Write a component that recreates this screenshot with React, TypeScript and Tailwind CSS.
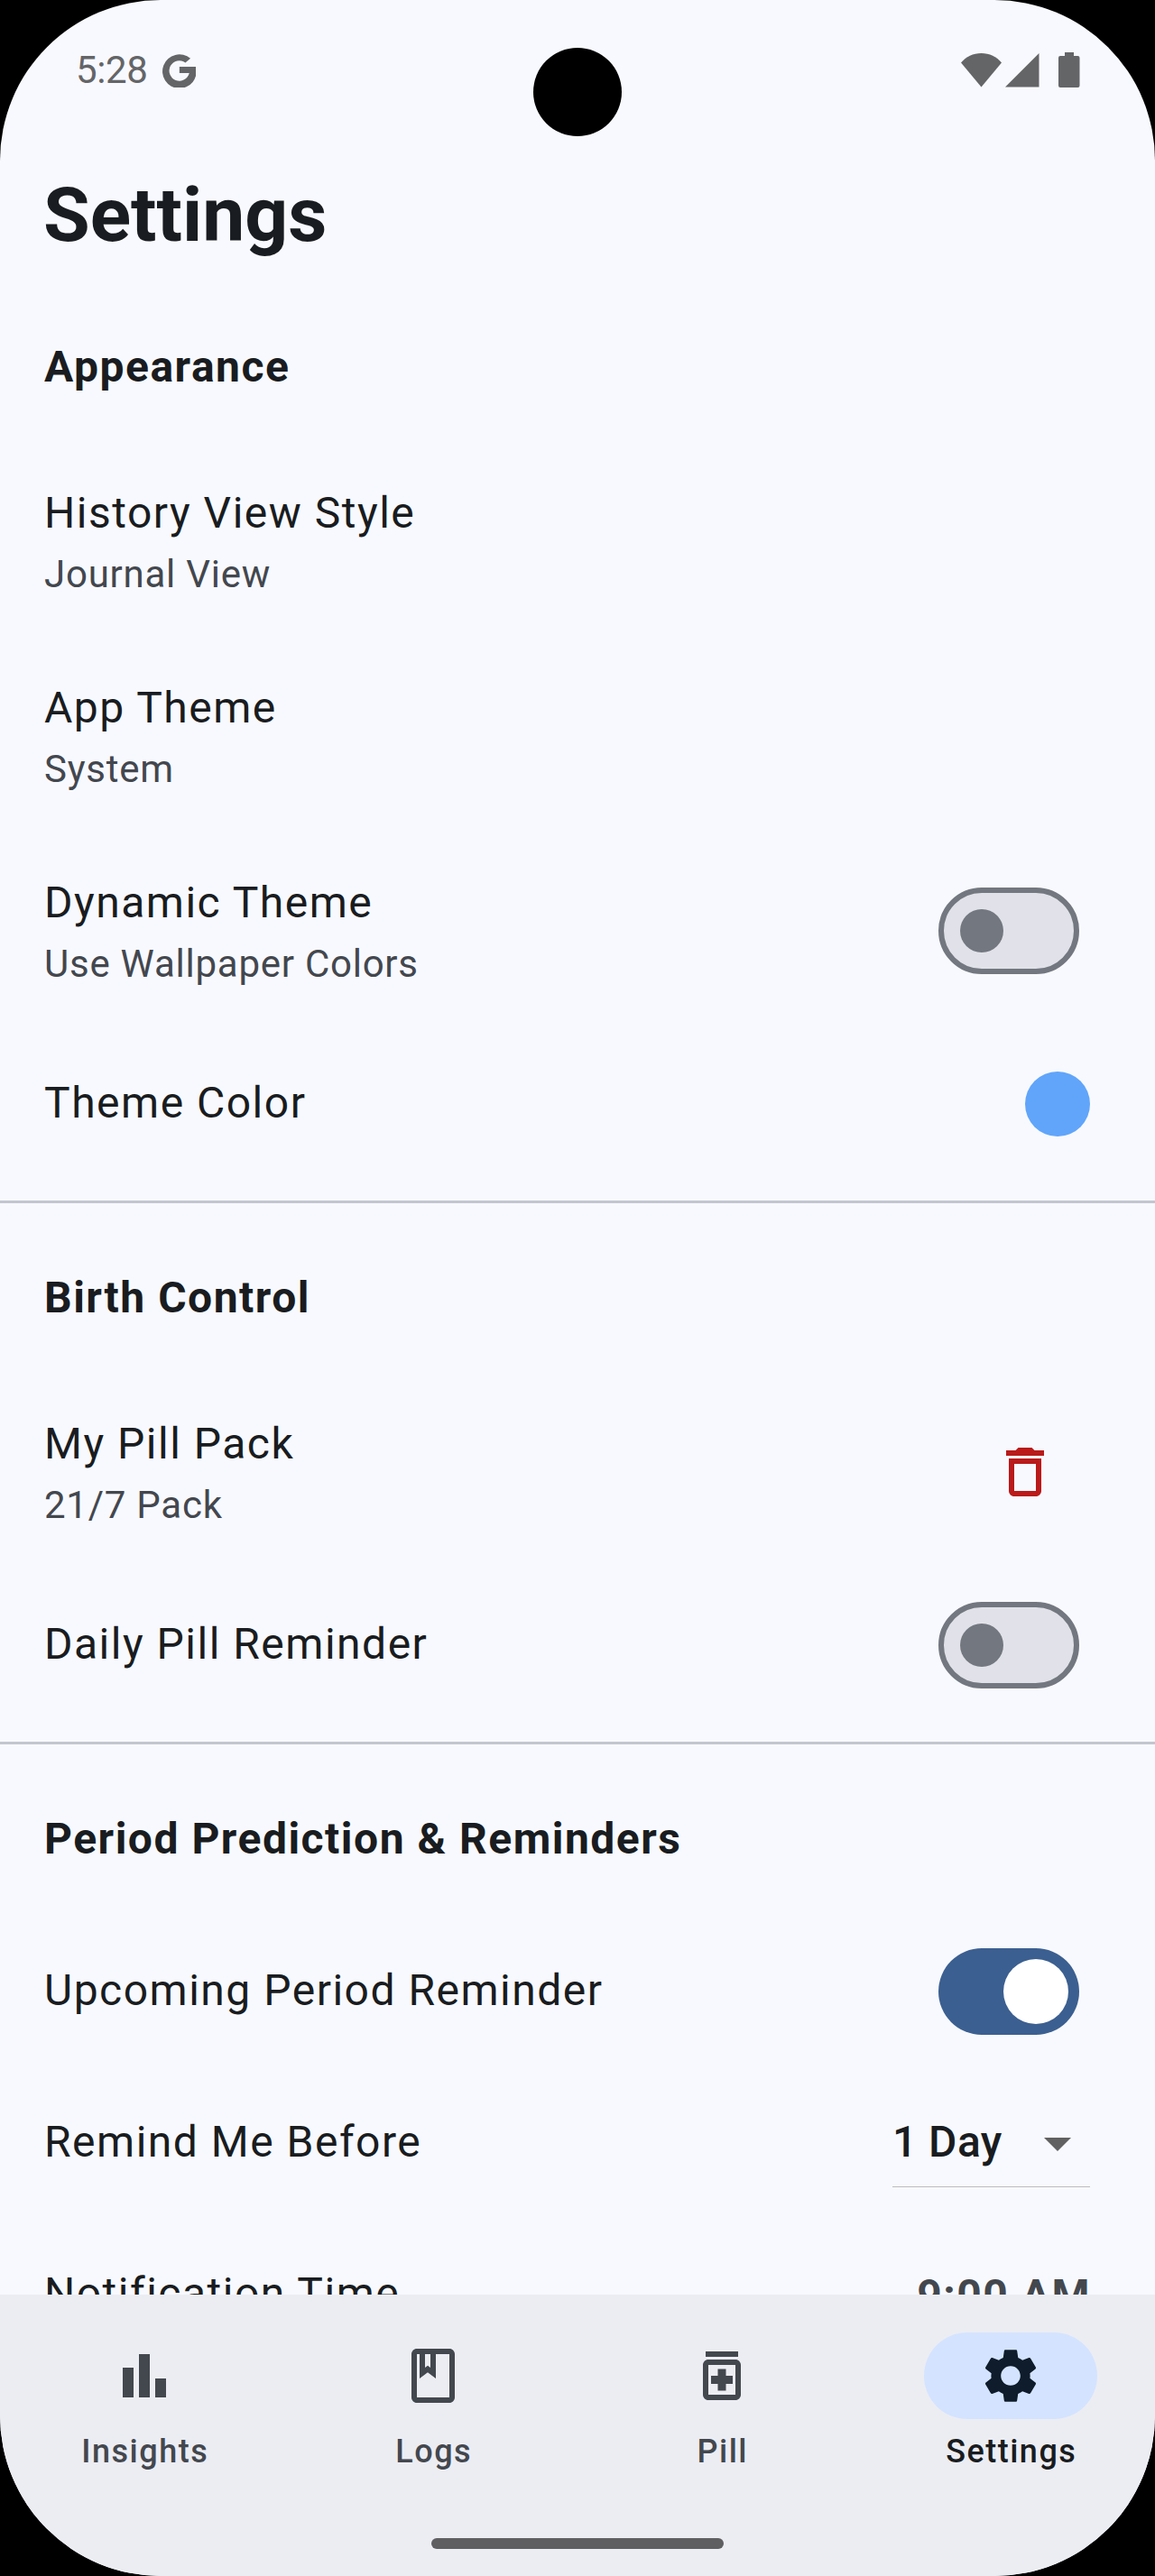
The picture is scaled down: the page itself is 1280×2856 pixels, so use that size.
import type { ReactNode } from "react";

const GoogleIcon = () => (
  <svg viewBox="0 0 112 114" className="h-[38px] w-[37px]" fill="#646567">
    <path d="M94 17A57 57 0 1 0 112 45H57V66H90A34 34 0 1 1 77 31Z" />
  </svg>
);

const WifiIcon = () => (
  <svg viewBox="0 0 45 38" className="h-[38px] w-[45px]" fill="#646567">
    <path d="M0 10.5C5.5 4 13.5 0 22.5 0S39.500 4 45 10.500L22.500 37.500Z" />
  </svg>
);

const SignalIcon = () => (
  <svg viewBox="0 0 38 38" className="h-[38px] w-[38px]" fill="#646567">
    <path d="M37.500 0V37.500H0Z" />
  </svg>
);

const BatteryIcon = () => (
  <svg viewBox="0 0 24 39" className="h-[39px] w-6" fill="#646567">
    <path d="M7 0H17V4H21.500Q23.500 4 23.500 6V37Q23.500 39 21.500 39H2Q0 39 0 37V6Q0 4 2 4H7Z" />
  </svg>
);

const Icon = ({ d, color }: { d: string; color: string }) => (
  <svg viewBox="0 0 24 24" className="h-[72px] w-[72px] shrink-0" fill={color}>
    <path d={d} />
  </svg>
);

const paths = {
  trash:
    "M16 9v10H8V9h8m-1.500-6h-5l-1 1H5v2h14V4h-3.500l-1-1zM18 7H6v12c0 1.100.9 2 2 2h8c1.100 0 2-.9 2-2V7z",
  dropDown: "M7 10l5 5 5-5z",
  bars: "M4 9h4v11H4zm12 4h4v7h-4zm-6-9h4v16h-4z",
  book: "M18 2H6c-1.100 0-2 .9-2 2v16c0 1.100.9 2 2 2h12c1.100 0 2-.9 2-2V4c0-1.100-.9-2-2-2zM9 4h2v5l-1-.75L9 9V4zm9 16H6V4h1v9l3-2.250L13 13V4h5v16z",
  pill: "M6 3h12v2H6zM17 6H7c-1.100 0-2 .9-2 2v11c0 1.100.9 2 2 2h10c1.100 0 2-.9 2-2V8c0-1.100-.9-2-2-2zm0 13H7V8h10v11zM8 15h2.500v2.500h3V15H16v-3h-2.500V9.500h-3V12H8z",
  gear: "M19.140 12.940c.04-.3.06-.61.06-.94 0-.32-.02-.64-.07-.94l2.030-1.580c.18-.14.23-.41.12-.61l-1.920-3.320c-.12-.22-.37-.29-.59-.22l-2.390.96c-.5-.38-1.030-.7-1.620-.94l-.36-2.540c-.04-.24-.24-.41-.48-.41h-3.840c-.24 0-.43.17-.47.41l-.36 2.540c-.59.24-1.130.57-1.620.94l-2.390-.96c-.22-.08-.47 0-.59.22L2.740 8.870c-.12.21-.08.47.12.61l2.030 1.580c-.05.3-.09.63-.09.94s.02.64.07.94l-2.030 1.580c-.18.14-.23.41-.12.61l1.920 3.320c.12.22.37.29.59.22l2.390-.96c.5.38 1.030.7 1.620.94l.36 2.540c.05.24.24.41.48.41h3.840c.24 0 .44-.17.47-.41l.36-2.540c.59-.24 1.130-.56 1.620-.94l2.390.96c.22.08.47 0 .59-.22l1.920-3.320c.12-.22.07-.47-.12-.61l-2.010-1.580zM12 15.600c-1.980 0-3.600-1.620-3.600-3.600s1.620-3.600 3.600-3.600 3.600 1.620 3.600 3.600-1.620 3.600-3.600 3.600z",
};

const Toggle = ({ on = false }: { on?: boolean }) =>
  on ? (
    <div className="mr-3 flex h-24 w-[156px] items-center justify-end rounded-full bg-[#3b5f90] pr-3">
      <div className="size-[72px] rounded-full bg-white" />
    </div>
  ) : (
    <div className="mr-3 flex h-24 w-[156px] items-center rounded-full border-[6px] border-[#73777f] bg-[#e1e2e9] pl-[18px]">
      <div className="size-12 rounded-full bg-[#73777f]" />
    </div>
  );

const SectionTitle = ({ children }: { children: ReactNode }) => (
  <h2 className="h-[168px] pt-[54px] pl-[49px] text-[48px] leading-[57px] font-bold tracking-[1.5px]">
    {children}
  </h2>
);

const Row = ({ title, subtitle, children }: { title: string; subtitle?: string; children?: ReactNode }) => (
  <div className={`flex items-center justify-between pr-[72px] pl-[49px] ${subtitle ? "h-[216px]" : "h-[168px]"}`}>
    <div className={`self-start ${subtitle ? "pt-12" : "pt-[54px]"}`}>
      <div className="text-[48px] leading-[57px] tracking-[1.5px]">{title}</div>
      {subtitle && (
        <div className="mt-[15px] text-[42px] leading-[49px] tracking-[0.75px] text-[#43474e]">{subtitle}</div>
      )}
    </div>
    {children}
  </div>
);

const Divider = () => (
  <div className="h-12 pt-[23px]">
    <div className="h-[3px] bg-[#c3c6cf]" />
  </div>
);

const NavItem = ({ label, d, active = false }: { label: string; d: string; active?: boolean }) => (
  <div className="flex w-80 flex-col items-center pt-[42px]">
    <div className={`flex h-24 w-48 items-center justify-center rounded-full ${active ? "bg-[#d4e3ff]" : ""}`}>
      <Icon d={d} color={active ? "#0e1c2b" : "#43474e"} />
    </div>
    <span
      className={`mt-[15px] pl-[1.5px] text-[36px] leading-[42px] font-medium tracking-[1.5px] ${active ? "text-[#191c20]" : "text-[#43474e]"}`}
    >
      {label}
    </span>
  </div>
);

export default function App() {
  return (
    <div className="h-[2856px] w-[1280px] bg-black">
      <div className="relative flex h-full flex-col overflow-hidden rounded-[178px] bg-[#f8f9ff] font-[Roboto,sans-serif] text-[#191c20]">
        <header className="flex h-[156px] shrink-0 items-start justify-between pr-[83px] pl-[84px] text-[#646567]">
          <div className="flex pt-[53px]">
            <span className="w-24 text-[42px] leading-[49px] tracking-[-0.4px]">5:28</span>
            <div className="pt-[6px]">
              <GoogleIcon />
            </div>
          </div>
          <div className="flex pt-[58px]">
            <div className="pt-px"><WifiIcon /></div>
            <div className="mr-[21px] ml-1 pt-px"><SignalIcon /></div>
            <BatteryIcon />
          </div>
        </header>
        <div className="absolute top-[53px] left-[591px] size-[98px] rounded-full bg-black" />

        <h1 className="h-[168px] shrink-0 px-12 pt-[33px] text-[84px] leading-[99px] font-bold">Settings</h1>

        <main className="h-[2220px] shrink-0 overflow-hidden">
          <SectionTitle>Appearance</SectionTitle>
          <Row title="History View Style" subtitle="Journal View" />
          <Row title="App Theme" subtitle="System" />
          <Row title="Dynamic Theme" subtitle="Use Wallpaper Colors">
            <Toggle />
          </Row>
          <Row title="Theme Color">
            <div className="size-[72px] rounded-full bg-[#60a5fa]" />
          </Row>
          <Divider />

          <SectionTitle>Birth Control</SectionTitle>
          <Row title="My Pill Pack" subtitle="21/7 Pack">
            <div className="mr-9">
              <Icon d={paths.trash} color="#ba1a1a" />
            </div>
          </Row>
          <Row title="Daily Pill Reminder">
            <Toggle />
          </Row>
          <Divider />

          <SectionTitle>Period Prediction &amp; Reminders</SectionTitle>
          <Row title="Upcoming Period Reminder">
            <Toggle on />
          </Row>
          <Row title="Remind Me Before">
            <div className="mt-[18px] flex h-[115px] w-[219px] items-start justify-between self-start border-b border-[#bdbdbd] pt-[30px]">
              <span className="pt-[6px] text-[48px] leading-[57px] font-medium tracking-[0.45px]">1 Day</span>
              <Icon d={paths.dropDown} color="#616161" />
            </div>
          </Row>
          <Row title="Notification Time">
            <span className="-mr-px self-start pt-14 text-[48px] leading-[57px] font-bold tracking-[1.5px] text-[#43474e]">
              9:00 AM
            </span>
          </Row>
        </main>

        <nav className="flex h-[270px] shrink-0 bg-[#ecedf3]">
          <NavItem label="Insights" d={paths.bars} />
          <NavItem label="Logs" d={paths.book} />
          <NavItem label="Pill" d={paths.pill} />
          <NavItem label="Settings" d={paths.gear} active />
        </nav>
        <footer className="flex h-[42px] shrink-0 justify-center bg-[#ecedf3]">
          <div className="h-3 w-[324px] rounded-full bg-[#5f5f61]" />
        </footer>
      </div>
    </div>
  );
}
